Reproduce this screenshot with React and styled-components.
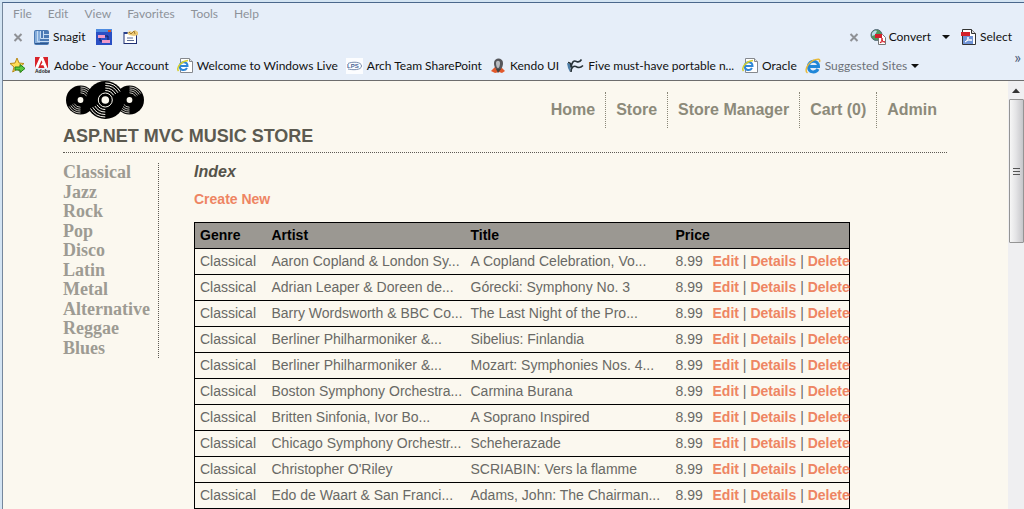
import styled, { createGlobalStyle } from "styled-components";

const GlobalStyle = createGlobalStyle`
  *,
  *::before,
  *::after {
    box-sizing: border-box;
  }

  body {
    margin: 0;
    background: #dbe7f5;
    font-family: "Liberation Sans", Arial, sans-serif;
  }

  ul {
    margin: 0;
    padding: 0;
    list-style: none;
  }

  button {
    border: none;
    padding: 0;
    background: none;
    font: inherit;
    color: inherit;
  }

  a {
    text-decoration: none;
  }

  svg {
    display: block;
    flex-shrink: 0;
  }
`;

/* ---------- browser window ---------- */

const Desktop = styled.div`
  display: flex;
  flex-direction: column;
  height: 100vh;
  padding: 2px 0 0 2px;
  overflow: hidden;
  background: #d3e4f3;
`;

const Window = styled.div`
  display: flex;
  flex-direction: column;
  flex: 1;
  min-height: 0;
  border-top: 1px solid #4a678c;
  border-left: 1px solid #75879c;
`;

const Chrome = styled.div`
  background: #e6eef9;
  border-bottom: 1px solid #6d6d6d;
  font-family: Lato, "Open Sans", sans-serif;
  font-size: 12px;
  line-height: 16px;
  color: #111;
  white-space: nowrap;
`;

const MenuBar = styled.div`
  display: flex;
  gap: 16px;
  padding: 3px 10px 1px;
  color: #8d9299;
`;

const ToolBar = styled.div`
  display: flex;
  align-items: center;
  height: 28px;
  padding: 0 12px 0 10px;
  gap: 11px;
`;

const FavoritesBar = styled.div`
  display: flex;
  align-items: center;
  height: 29px;
  padding: 0 3px 0 6px;
  gap: 8px;
`;

const ToolButton = styled.button`
  display: flex;
  align-items: center;
  gap: 3px;
`;

const CloseButton = styled.button`
  display: flex;
`;

const Favorite = styled.a`
  display: flex;
  align-items: center;
  gap: 4px;
  color: ${(props) => (props.$muted ? "#6d7177" : "#111")};
`;

const Spacer = styled.div`
  flex: 1;
`;

const More = styled.button`
  align-self: flex-start;
  font-size: 16px;
  line-height: 12px;
  color: #4b5876;
`;

/* ---------- page ---------- */

const Viewport = styled.div`
  display: flex;
  flex: 1;
  min-height: 0;
`;

const Page = styled.div`
  flex: 1;
  min-width: 0;
  overflow: hidden;
  padding: 0 61px 0 60px;
  background: #fbf8ef;
`;

const Header = styled.header`
  display: flex;
  justify-content: space-between;
  align-items: flex-start;
  height: 72px;
  border-bottom: 1px dotted #5d5a53;
`;

const Title = styled.h1`
  margin: 7px 0 0;
  font-size: 18px;
  line-height: 20px;
  color: #5c5a50;
`;

const Nav = styled.ul`
  display: flex;
  padding-top: 11px;

  li + li {
    border-left: 1px dotted #8a8778;
  }
`;

const NavLink = styled.a`
  display: block;
  padding: 0 10px;
  font-size: 16px;
  line-height: 36px;
  font-weight: 700;
  color: #8c8a7a;
`;

const Columns = styled.div`
  display: flex;
  align-items: flex-start;
  gap: 35px;
  padding-top: 10px;
`;

const Genres = styled.ul`
  display: flex;
  flex-direction: column;
  justify-content: space-between;
  width: 96px;
  min-height: 195px;
  border-right: 1px dotted #5d5a53;
  font-family: "Liberation Serif", "Times New Roman", serif;
  font-size: 18px;
  line-height: 19px;
  font-weight: 700;

  a {
    color: #9d9b93;
  }
`;

const Main = styled.main`
  flex: 1;
  min-width: 0;
`;

const Heading = styled.h2`
  margin: 0;
  font-size: 16px;
  line-height: 18px;
  font-style: italic;
  color: #55534a;
`;

const ActionLink = styled.a`
  font-weight: 700;
  color: #ee8563;
`;

const CreateLine = styled.p`
  margin: 10px 0 14px;
  font-size: 14px;
  line-height: 17px;
`;

const Table = styled.table`
  width: 88%;
  max-width: 656px;
  table-layout: fixed;
  border-collapse: collapse;
  border: 1px solid #000;
  font-size: 14px;
  line-height: 17px;
  color: #696965;
  white-space: nowrap;

  tr {
    border-bottom: 1px solid #000;
  }

  th,
  td {
    padding: 4px 0 4px 5px;
    text-align: left;
  }

  th {
    background: #9b9892;
    color: #000;
  }
`;

const Col = styled.col`
  width: ${(props) => props.$width}px;
`;

const ScrollBar = styled.div`
  display: flex;
  flex-direction: column;
  align-items: center;
  width: 16px;
  background: #efeff1;
`;

const ScrollUp = styled.button`
  display: grid;
  place-items: center;
  width: 16px;
  height: 18px;
`;

const ScrollThumb = styled.div`
  display: grid;
  place-items: center;
  width: 15px;
  height: 144px;
  border: 1px solid #949494;
  border-radius: 1px;
  background: linear-gradient(90deg, #f6f6f6, #e4e4e6 45%, #c6c6ca);
`;

/* ---------- icons ---------- */

function CloseIcon() {
  return (
    <svg width="10" height="16" viewBox="0 0 10 16">
      <path d="M1.5 5l7 7M8.5 5l-7 7" stroke="#8f9196" strokeWidth="2" />
    </svg>
  );
}

function CaretIcon() {
  return (
    <svg width="8" height="8" viewBox="0 0 8 8">
      <path d="M0 2h8L4 6z" fill="#111" />
    </svg>
  );
}

function SnagitIcon() {
  return (
    <svg width="16" height="15" viewBox="0 0 16 15">
      <rect width="15" height="15" rx="2" fill="#4a79b4" />
      <rect x="1" y="1" width="5" height="13" rx="1" fill="#86addb" />
      <path
        d="M3.500 1v10.500H15M6.500 1v7.500H15M9.500 4.500H15M9.500 1v7.500"
        stroke="#c6dcf3"
        fill="none"
      />
      <path d="M1 13.500h13" stroke="#2f578c" />
    </svg>
  );
}

function SnagitWindowIcon() {
  return (
    <svg width="16" height="16" viewBox="0 0 16 16">
      <rect width="16" height="16" fill="#2a4fc4" />
      <rect width="16" height="3" fill="#4d8ae0" />
      <path d="M12 1h3v2h-3z" fill="#d4502e" />
      <rect x="2" y="6" width="7" height="3" fill="#f09ac8" />
      <rect x="6" y="11" width="8" height="3" fill="#f09ac8" />
      <path d="M4 9v3h2M9 7h3v4" stroke="#15205c" fill="none" />
    </svg>
  );
}

function SnagitEditIcon() {
  return (
    <svg width="16" height="16" viewBox="0 0 16 16">
      <rect x="1" y="3.500" width="12.500" height="11" fill="#fff" stroke="#1f2f73" />
      <rect x="1" y="3" width="13" height="2" fill="#27408f" />
      <path d="M4 9h6M4 11.500h7" stroke="#5c6b94" />
      <path d="M4 4l3-2 2 1 3-2 3 2v3l-4 1-5-1z" fill="#ecc978" />
      <path d="M6 3l2 2 3-3 1 3" stroke="#a37b31" fill="none" />
    </svg>
  );
}

function StarIcon() {
  return (
    <svg width="17" height="17" viewBox="0 0 17 17">
      <path
        d="M8 1l2 5 5 .5-4 3.500 1.300 5L8 12.300 3.700 15 5 10 1 6.500 6 6z"
        fill="#ffdc55"
        stroke="#b98a1a"
      />
      <path
        d="M6 10h5V7.500l5 4-5 4V13H6z"
        fill="#5dca3f"
        stroke="#24801c"
      />
    </svg>
  );
}

function AdobeIcon() {
  return (
    <svg width="16" height="17" viewBox="0 0 16 17">
      <rect x="1" width="13" height="11" fill="#d8232a" />
      <path d="M6 0h3l4.500 11h-3L9.400 8.300H6.600L8.400 5.600 7.500 3.200 4.200 11H1z" fill="#fff" />
      <text
        x="1"
        y="16"
        fontSize="5"
        fontWeight="700"
        fontFamily="Liberation Sans"
        fill="#222"
      >
        Adobe
      </text>
    </svg>
  );
}

function IePageIcon() {
  return (
    <svg width="16" height="17" viewBox="0 0 16 17">
      <path d="M3.500 1.500h9l3 3v11h-12z" fill="#fff" stroke="#85888e" />
      <path d="M12.500 1.500v3h3" fill="#dde2ea" stroke="#85888e" />
      <path
        d="M2.700 9h7.800c0-5-7.800-5-7.800 0s5.500 5 7.300 2"
        stroke="#2f86d6"
        strokeWidth="2"
        fill="none"
      />
      <path
        d="M1.500 14C-1 11 4 4 11 3.500"
        stroke="#d6cf2e"
        strokeWidth="1.500"
        fill="none"
      />
    </svg>
  );
}

function IeIcon() {
  return (
    <svg width="16" height="16" viewBox="0 0 16 16">
      <path
        d="M3.500 8.500h10c0-7-10-7-10 0s7.500 6.500 9.500 2.500"
        stroke="#2087d8"
        strokeWidth="3"
        fill="none"
      />
      <path
        d="M2.500 15C-2 12 5 1 13.500 1.200c1.500.3 1.500 1.800.8 3"
        stroke="#e8b93a"
        strokeWidth="1.500"
        fill="none"
      />
    </svg>
  );
}

function LpsIcon() {
  return (
    <svg width="17" height="16" viewBox="0 0 17 16">
      <rect width="17" height="16" fill="#fcfdff" />
      <path
        d="M2 5.500C6 3.500 15.500 3.500 15.500 8S6 12 2 11"
        stroke="#7b8fb0"
        fill="none"
      />
      <text
        x="1"
        y="10"
        fontSize="6"
        fontWeight="700"
        fontFamily="Liberation Sans"
        fill="#4a6596"
      >
        LPS
      </text>
    </svg>
  );
}

function KendoIcon() {
  return (
    <svg width="16" height="16" viewBox="0 0 16 16">
      <path d="M1 13l4-4h6l4 4-3 2-3-1-4 1z" fill="#e2582b" />
      <path d="M4 5c0-6 9-6 9 0 0 4-2 7-4.500 7S4 9 4 5z" fill="#55565b" />
      <path d="M6 5c0-3 4-3 4 0 0 3-1 5-2 5S6 8 6 5z" fill="#b9bcc1" />
      <path d="M6 11l2 4 3-4z" fill="#444" />
    </svg>
  );
}

function WaveIcon() {
  return (
    <svg width="17" height="16" viewBox="0 0 17 16">
      <path d="M0 5l4 1-1 8-2-4z" fill="#4c7ea8" />
      <path
        d="M1 4.500c3 0 3 2 3 5 1-6 3-7.500 5.500-6 2 1 3.500.5 5-2M4 14c0-5 3-7 6-5 2 1 4 .5 6-1.500"
        stroke="#273238"
        strokeWidth="1.600"
        fill="none"
      />
    </svg>
  );
}

function ConvertIcon() {
  return (
    <svg width="16" height="16" viewBox="0 0 16 16">
      <circle cx="6.500" cy="6" r="5.500" fill="#4f9a5c" stroke="#56687a" />
      <path d="M2 4c2-3 4-3 5-2L5 6 2 7z" fill="#b8dbe8" />
      <path d="M8.500 5.500h4l3 3v7h-7z" fill="#fff" stroke="#777" />
      <rect x="5" y="5" width="7" height="4" fill="#d3202a" />
      <path d="M10 14c2-2 2-4 2-5 0 3 1 4 3 4-2-1-4 0-5 1z" stroke="#d3202a" fill="none" />
    </svg>
  );
}

function SelectIcon() {
  return (
    <svg width="16" height="16" viewBox="0 0 16 16">
      <path d="M1.500.5h9l4 4v11h-13z" fill="#fff" stroke="#333" />
      <path d="M10.500.5v4h4" fill="#ddd" stroke="#333" />
      <rect y="3" width="9" height="4" fill="#d3202a" />
      <rect x="2" y="7" width="10" height="8" fill="#6f93d6" />
      <path d="M4 13c3-2 3-4 3-5 0 3 2 4 4 3-3-1-5 1-7 2z" stroke="#fff" fill="none" />
    </svg>
  );
}

function Record({ cx, cy, r, ringed }) {
  return (
    <g transform={`translate(${cx} ${cy}) scale(${r / 19})`}>
      <circle r="19" fill="#000" />
      {ringed && <circle r="7" fill="none" stroke="#fbf8ef" strokeWidth="1" />}
      <circle r="3.800" fill="#fbf8ef" />
      {[9.5, 12, 14.5, 17].map((ring) => (
        <path
          key={ring}
          d={`M0 ${-ring}A${ring} ${ring} 0 0 1 ${ring * 0.87} ${-ring * 0.5}M0 ${ring}A${ring} ${ring} 0 0 1 ${-ring * 0.87} ${ring * 0.5}`}
          fill="none"
          stroke="#fbf8ef"
          strokeWidth="1"
        />
      ))}
    </g>
  );
}

function Logo() {
  return (
    <svg width="82" height="38" viewBox="0 0 82 38">
      <Record cx={17.5} cy={19} r={14.5} />
      <Record cx={66.5} cy={19} r={14.5} />
      <Record cx={42.3} cy={19} r={19} ringed />
    </svg>
  );
}

/* ---------- data ---------- */

const menus = ["File", "Edit", "View", "Favorites", "Tools", "Help"];

const favorites = [
  { name: "Adobe - Your Account", Icon: AdobeIcon },
  { name: "Welcome to Windows Live", Icon: IePageIcon },
  { name: "Arch Team SharePoint", Icon: LpsIcon },
  { name: "Kendo UI", Icon: KendoIcon },
  { name: "Five must-have portable n...", Icon: WaveIcon },
  { name: "Oracle", Icon: IePageIcon },
];

const navItems = ["Home", "Store", "Store Manager", "Cart (0)", "Admin"];

const genres = [
  "Classical",
  "Jazz",
  "Rock",
  "Pop",
  "Disco",
  "Latin",
  "Metal",
  "Alternative",
  "Reggae",
  "Blues",
];

const albums = [
  { artist: "Aaron Copland & London Sy...", title: "A Copland Celebration, Vo..." },
  { artist: "Adrian Leaper & Doreen de...", title: "Górecki: Symphony No. 3" },
  { artist: "Barry Wordsworth & BBC Co...", title: "The Last Night of the Pro..." },
  { artist: "Berliner Philharmoniker &...", title: "Sibelius: Finlandia" },
  { artist: "Berliner Philharmoniker &...", title: "Mozart: Symphonies Nos. 4..." },
  { artist: "Boston Symphony Orchestra...", title: "Carmina Burana" },
  { artist: "Britten Sinfonia, Ivor Bo...", title: "A Soprano Inspired" },
  { artist: "Chicago Symphony Orchestr...", title: "Scheherazade" },
  { artist: "Christopher O'Riley", title: "SCRIABIN: Vers la flamme" },
  { artist: "Edo de Waart & San Franci...", title: "Adams, John: The Chairman..." },
];

function AlbumRow({ album }) {
  return (
    <tr>
      <td>Classical</td>
      <td>{album.artist}</td>
      <td>{album.title}</td>
      <td>8.99</td>
      <td>
        <ActionLink href="#edit">Edit</ActionLink> |{" "}
        <ActionLink href="#details">Details</ActionLink> |{" "}
        <ActionLink href="#delete">Delete</ActionLink>
      </td>
    </tr>
  );
}

function BrowserChrome() {
  return (
    <Chrome>
      <MenuBar>
        {menus.map((menu) => (
          <button key={menu}>{menu}</button>
        ))}
      </MenuBar>
      <ToolBar>
        <CloseButton aria-label="Close toolbar">
          <CloseIcon />
        </CloseButton>
        <ToolButton>
          <SnagitIcon />
          Snagit
        </ToolButton>
        <ToolButton aria-label="Capture window">
          <SnagitWindowIcon />
        </ToolButton>
        <ToolButton aria-label="Open editor">
          <SnagitEditIcon />
        </ToolButton>
        <Spacer />
        <CloseButton aria-label="Close toolbar">
          <CloseIcon />
        </CloseButton>
        <ToolButton>
          <ConvertIcon />
          Convert
        </ToolButton>
        <ToolButton aria-label="Convert options">
          <CaretIcon />
        </ToolButton>
        <ToolButton>
          <SelectIcon />
          Select
        </ToolButton>
      </ToolBar>
      <FavoritesBar>
        <ToolButton aria-label="Add to favorites bar">
          <StarIcon />
        </ToolButton>
        {favorites.map(({ name, Icon }) => (
          <Favorite key={name} href="#favorite">
            <Icon />
            {name}
          </Favorite>
        ))}
        <Favorite href="#suggested" $muted>
          <IeIcon />
          Suggested Sites
          <CaretIcon />
        </Favorite>
        <Spacer />
        <More aria-label="More">»</More>
      </FavoritesBar>
    </Chrome>
  );
}

export default function App() {
  return (
    <>
      <GlobalStyle />
      <Desktop>
        <Window>
          <BrowserChrome />
          <Viewport>
            <Page>
              <Header>
                <div>
                  <Logo />
                  <Title>ASP.NET MVC MUSIC STORE</Title>
                </div>
                <Nav>
                  {navItems.map((item) => (
                    <li key={item}>
                      <NavLink href="#nav">{item}</NavLink>
                    </li>
                  ))}
                </Nav>
              </Header>
              <Columns>
                <Genres>
                  {genres.map((genre) => (
                    <li key={genre}>
                      <a href="#genre">{genre}</a>
                    </li>
                  ))}
                </Genres>
                <Main>
                  <Heading>Index</Heading>
                  <CreateLine>
                    <ActionLink href="#create">Create New</ActionLink>
                  </CreateLine>
                  <Table>
                    <colgroup>
                      <Col $width={72} />
                      <Col $width={199} />
                      <Col $width={205} />
                      <Col $width={37} />
                      <col />
                    </colgroup>
                    <thead>
                      <tr>
                        <th>Genre</th>
                        <th>Artist</th>
                        <th>Title</th>
                        <th>Price</th>
                        <th aria-label="Actions" />
                      </tr>
                    </thead>
                    <tbody>
                      {albums.map((album, index) => (
                        <AlbumRow key={index} album={album} />
                      ))}
                    </tbody>
                  </Table>
                </Main>
              </Columns>
            </Page>
            <ScrollBar>
              <ScrollUp aria-label="Scroll up">
                <svg width="8" height="5" viewBox="0 0 8 5">
                  <path d="M0 5l4-4.500L8 5z" fill="#333" />
                </svg>
              </ScrollUp>
              <ScrollThumb>
                <svg width="7" height="9" viewBox="0 0 7 9">
                  <path d="M0 1.500h7M0 4.500h7M0 7.500h7" stroke="#555" />
                </svg>
              </ScrollThumb>
            </ScrollBar>
          </Viewport>
        </Window>
      </Desktop>
    </>
  );
}
